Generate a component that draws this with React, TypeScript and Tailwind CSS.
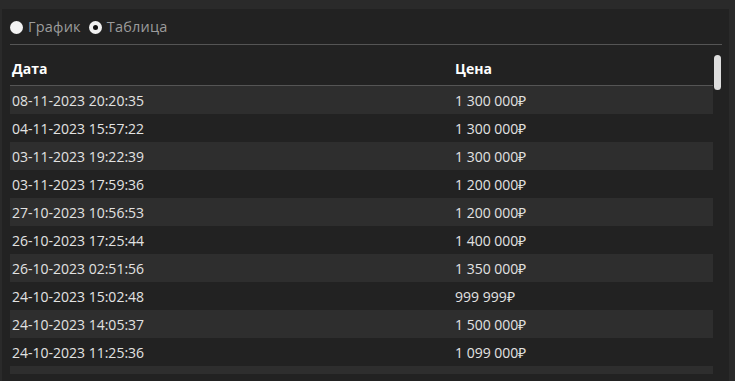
import React from "react";

interface Row {
  date: string;
  price: string;
}

const rows: Row[] = [
  { date: "08-11-2023 20:20:35", price: "1 300 000₽" },
  { date: "04-11-2023 15:57:22", price: "1 300 000₽" },
  { date: "03-11-2023 19:22:39", price: "1 300 000₽" },
  { date: "03-11-2023 17:59:36", price: "1 200 000₽" },
  { date: "27-10-2023 10:56:53", price: "1 200 000₽" },
  { date: "26-10-2023 17:25:44", price: "1 400 000₽" },
  { date: "26-10-2023 02:51:56", price: "1 350 000₽" },
  { date: "24-10-2023 15:02:48", price: "999 999₽" },
  { date: "24-10-2023 14:05:37", price: "1 500 000₽" },
  { date: "24-10-2023 11:25:36", price: "1 099 000₽" },
  { date: "", price: "" },
];

function Radio({ label, checked }: { label: string; checked?: boolean }) {
  return (
    <label className="flex items-center gap-[5px] cursor-pointer">
      <span className="w-[13px] h-[13px] rounded-full bg-[#f2f2f2] flex items-center justify-center">
        {checked && <span className="w-[5px] h-[5px] rounded-full bg-[#111]" />}
      </span>
      <span className="text-[14.5px] tracking-[0.2px] text-[#9c9c9c]">{label}</span>
    </label>
  );
}

export default function App() {
  return (
    <div
      className="w-[735px] h-[381px] overflow-hidden bg-[#2a2a2a] pt-[9px] pl-[2px] pr-[6px]"
      style={{ fontFamily: '"Open Sans", "Liberation Sans", sans-serif' }}
    >
      <div className="h-full bg-[#222222] pl-2 pr-[7px] flex flex-col">
        {/* Mode switch */}
        <div className="flex items-center gap-[8px] h-[36px] pt-[1px] border-b border-[#555555]">
          <Radio label="График" />
          <Radio label="Таблица" checked />
        </div>

        {/* Table + scrollbar */}
        <div className="mt-[9px] h-[320px] flex">
          <div className="flex-1 overflow-hidden">
            <div className="grid grid-cols-[443px_1fr] h-[32px] items-center pb-[3px] px-[2px] border-b border-[#555555] text-[14px] font-bold text-white">
              <span>Дата</span>
              <span>Цена</span>
            </div>
            {rows.map((r, i) => (
              <div
                key={i}
                className={`grid grid-cols-[443px_1fr] h-[28px] items-center px-[2px] text-[14px] text-[#e2e2e2] ${
                  i % 2 === 0 ? "bg-[#2e2e2e]" : "bg-[#222222]"
                }`}
              >
                <span>{r.date}</span>
                <span>{r.price}</span>
              </div>
            ))}
          </div>
          <div className="w-[9px] pt-[1px] pl-[1px]">
            <div className="w-[7px] h-[35px] rounded-full bg-[#dedede]" />
          </div>
        </div>
      </div>
    </div>
  );
}
